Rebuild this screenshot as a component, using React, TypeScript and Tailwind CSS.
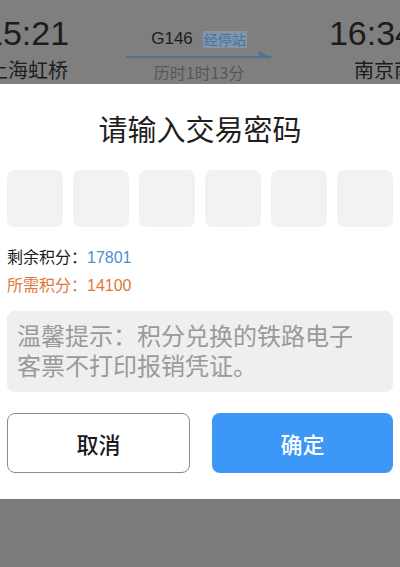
import React from 'react';

const font = { fontFamily: '"Noto Sans CJK SC", "Noto Sans", sans-serif' };

const TrainHeader: React.FC = () => {
  return (
    <div className="h-[84px] bg-[#7f7f7f] overflow-hidden flex justify-between items-start text-[#1c1c1c]">
      {/* departure */}
      <div className="-ml-[16px] pt-[16px] flex flex-col items-start">
        <div className="text-[34px] leading-[34px] font-['Liberation_Sans',sans-serif]">15:21</div>
        <div className="mt-[10px] ml-[4px] text-[20px] leading-[20px]">上海虹桥</div>
      </div>

      {/* train no + duration */}
      <div className="pt-[29px] flex flex-col items-center w-[146px]">
        <div className="flex items-center gap-[10px]">
          <span className="text-[17px] leading-[20px] font-['Liberation_Sans',sans-serif]">G146</span>
          <span className="text-[14px] leading-[17px] px-[1px] bg-[#8595a7] text-[#3f74aa]">经停站</span>
        </div>
        <svg width="146" height="9" viewBox="0 0 146 9" className="mt-[1px]">
          <line x1="0" y1="7" x2="145" y2="7" stroke="#4e7297" strokeWidth="2" />
          <path d="M133 1 L146 8 L133 8 Z" fill="#4e7297" />
        </svg>
        <div className="mt-[3px] text-[16px] leading-[20px] text-[#575757]">历时1时13分</div>
      </div>

      {/* arrival */}
      <div className="-mr-[14px] pt-[16px] flex flex-col items-end">
        <div className="text-[34px] leading-[34px] font-['Liberation_Sans',sans-serif]">16:34</div>
        <div className="mt-[10px] text-[20px] leading-[20px]">南京南</div>
      </div>
    </div>
  );
};

const App: React.FC = () => {
  const boxes = [0, 1, 2, 3, 4, 5];
  return (
    <div className="w-[400px] h-[567px] bg-[#7b7b7b] overflow-hidden" style={font}>
      <TrainHeader />

      <div className="bg-white px-[7px] pt-[26px] pb-[26px]">
        <h1 className="text-center text-[29px] leading-[36px] text-[#1f1f1f]">请输入交易密码</h1>

        <div className="mt-[24px] flex justify-between">
          {boxes.map((b) => (
            <div key={b} className="w-[56px] h-[57px] rounded-[7px] bg-[#f2f2f2]" />
          ))}
        </div>

        <div className="mt-[16px] text-[16px] leading-[26px]">
          <div className="text-[#1c1c1c]">
            剩余积分：<span className="text-[#4a90d6] font-['Liberation_Sans',sans-serif]">17801</span>
          </div>
          <div className="text-[#e0773a]">
            所需积分：<span className="font-['Liberation_Sans',sans-serif]">14100</span>
          </div>
        </div>

        <div className="mt-[12px] rounded-[8px] bg-[#efefef] pl-[10px] pr-[24px] pt-[9px] pb-[12px] text-[24px] leading-[30px] text-[#9a9a9a]">
          温馨提示：积分兑换的铁路电子客票不打印报销凭证。
        </div>

        <div className="mt-[21px] flex justify-between">
          <button className="w-[183px] h-[60px] rounded-[8px] border border-[#8c8c8c] bg-white text-[22px] font-medium text-[#1a1a1a]">
            取消
          </button>
          <button className="w-[181px] h-[60px] rounded-[8px] bg-[#3c97f6] text-[22px] font-medium text-white">
            确定
          </button>
        </div>
      </div>
    </div>
  );
};

export default App;
